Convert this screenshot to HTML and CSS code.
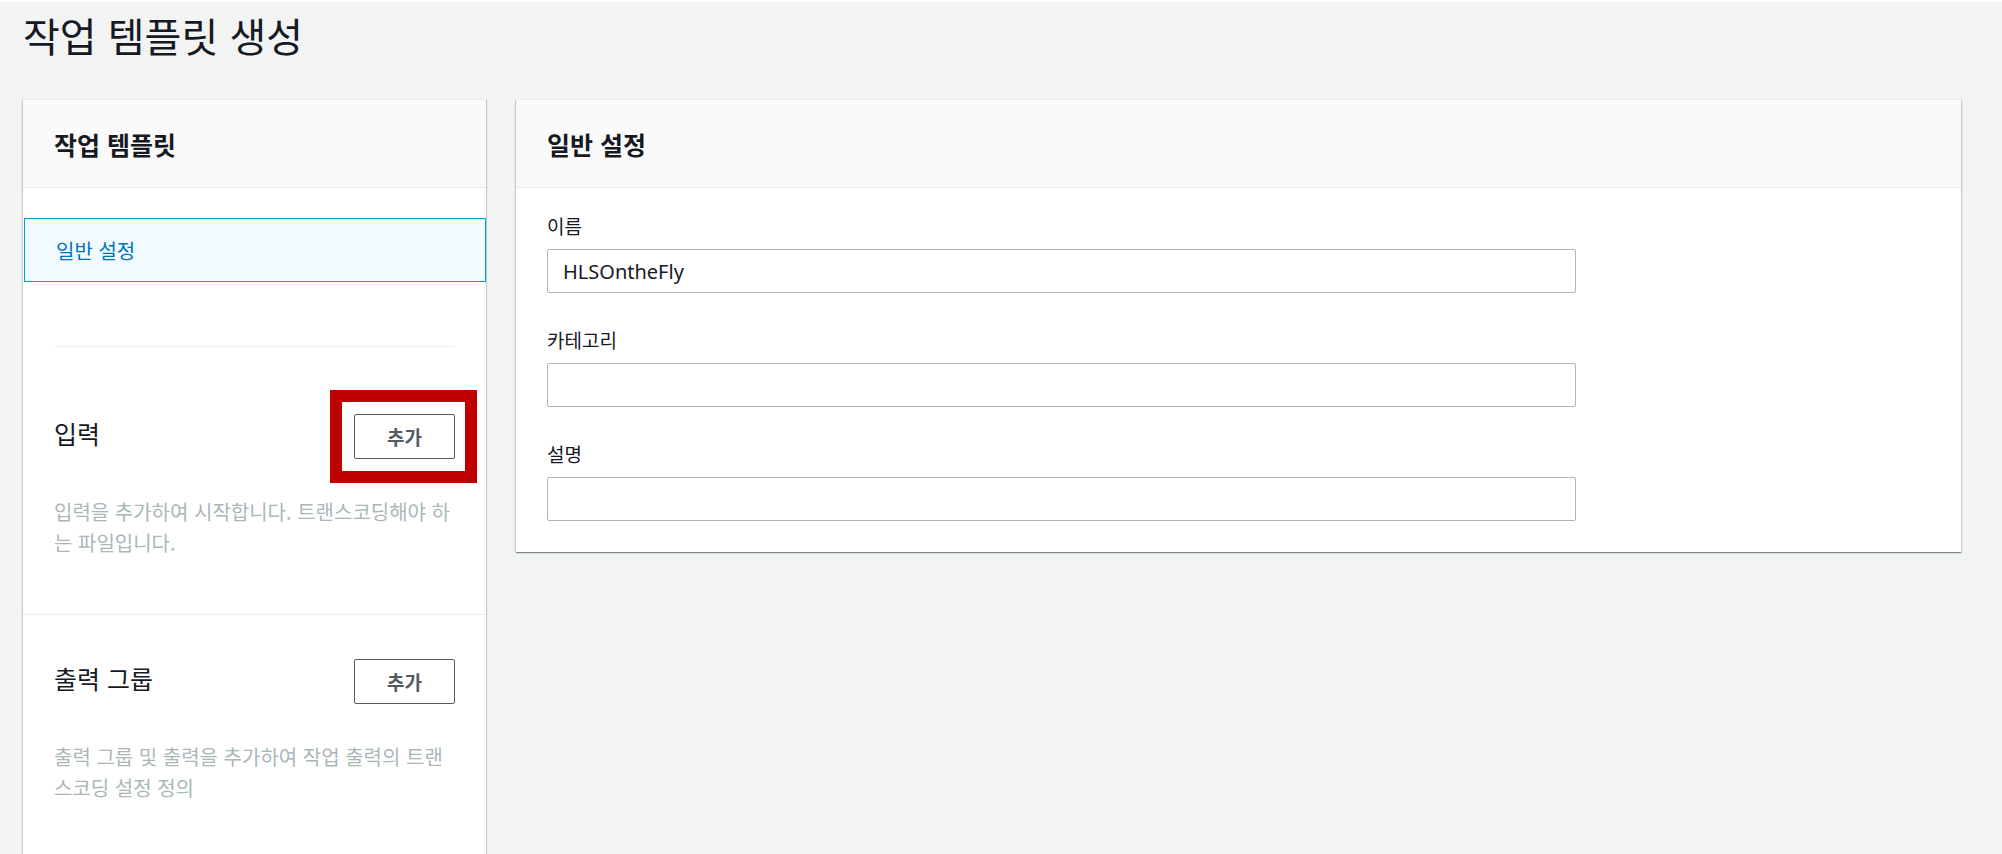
FILE: index.html
```html
<!DOCTYPE html>
<html lang="ko">
<head>
<meta charset="utf-8">
<title>작업 템플릿 생성</title>
<link rel="stylesheet" href="styles.css">
</head>
<body>
<main class="page">
  <h1 class="page-title">작업 템플릿 생성</h1>
  <div class="layout">
    <aside class="panel side-panel">
      <div class="panel-header"><h2 class="panel-title">작업 템플릿</h2></div>
      <div class="side-body">
        <div class="nav-item">일반 설정</div>
        <hr class="divider">
        <section class="side-section">
          <div class="section-row">
            <h3 class="section-title">입력</h3>
            <span class="highlight"><button class="btn" type="button">추가</button></span>
          </div>
          <p class="section-desc">입력을 추가하여 시작합니다. 트랜스코딩해야 하는 파일입니다.</p>
        </section>
        <section class="side-section side-section-bordered">
          <div class="section-row">
            <h3 class="section-title">출력 그룹</h3>
            <button class="btn" type="button">추가</button>
          </div>
          <p class="section-desc">출력 그룹 및 출력을 추가하여 작업 출력의 트랜스코딩 설정 정의</p>
        </section>
      </div>
    </aside>
    <section class="panel main-panel">
      <div class="panel-header"><h2 class="panel-title">일반 설정</h2></div>
      <div class="form-body">
        <div class="field">
          <label class="field-label" for="name">이름</label>
          <input class="text-input" id="name" type="text" value="HLSOntheFly">
        </div>
        <div class="field">
          <label class="field-label" for="category">카테고리</label>
          <input class="text-input" id="category" type="text" value="">
        </div>
        <div class="field">
          <label class="field-label" for="desc">설명</label>
          <input class="text-input" id="desc" type="text" value="">
        </div>
      </div>
    </section>
  </div>
</main>
</body>
</html>
```
FILE: styles.css
```css
html, body {
  margin: 0;
  padding: 0;
  overflow: hidden;
}

body {
  background: #f2f3f3;
  border-top: 2px solid #ffffff;
  font-family: "Noto Sans CJK KR", "Noto Sans", sans-serif;
  color: #16191f;
}

.page {
  padding: 8px 0 0 23px;
}

.page-title {
  margin: 0;
  font-size: 40px;
  line-height: 50px;
  font-weight: 400;
  color: #16191f;
}

.layout {
  margin-top: 39px;
  display: grid;
  grid-template-columns: 463px 1445px;
  column-gap: 30px;
  align-items: start;
}

.panel {
  background: #ffffff;
  border-top: 1px solid #eaeded;
  box-shadow: 0 1px 1px 0 rgba(0, 28, 36, 0.3),
              1px 1px 1px 0 rgba(0, 28, 36, 0.15),
              -1px 1px 1px 0 rgba(0, 28, 36, 0.15);
}

.panel-header {
  box-sizing: border-box;
  height: 88px;
  padding: 0 31px;
  display: flex;
  align-items: center;
  background: #fafafa;
  border-bottom: 1px solid #eaeded;
}

.panel-title {
  margin: 0;
  font-size: 25px;
  line-height: 30px;
  font-weight: 700;
  color: #16191f;
}

.side-panel {
  min-height: 800px;
}

.side-body {
  padding-top: 30px;
}

.nav-item {
  box-sizing: border-box;
  height: 64px;
  margin-left: 1px;
  padding-left: 31px;
  display: flex;
  align-items: center;
  background: #f1faff;
  border: 1px solid #00a1c9;
  font-size: 20px;
  color: #0073bb;
}

.divider {
  margin: 64px 31px 0;
  border: 0;
  border-top: 1px solid #eaeded;
  height: 0;
}

.side-section {
  padding: 67px 31px 56px;
}

.side-section-bordered {
  border-top: 1px solid #eaeded;
  padding-top: 44px;
}

.section-row {
  display: flex;
  align-items: center;
  justify-content: space-between;
}

.section-title {
  margin: 0;
  padding-bottom: 8px;
  font-size: 25px;
  line-height: 30px;
  font-weight: 400;
  color: #16191f;
}

.btn {
  box-sizing: border-box;
  width: 101px;
  height: 45px;
  padding: 0;
  background: #ffffff;
  border: 1px solid #545b64;
  border-radius: 2px;
  font-family: "Noto Sans CJK KR", "Noto Sans", sans-serif;
  font-size: 19px;
  font-weight: 700;
  color: #545b64;
  display: block;
}

.highlight {
  position: relative;
  display: block;
}

.highlight::after {
  content: "";
  position: absolute;
  top: -24px;
  bottom: -24px;
  left: -24px;
  right: -22px;
  border: 12px solid #c00000;
  pointer-events: none;
}

.section-desc {
  margin: 37px 0 0;
  font-size: 20px;
  line-height: 31px;
  color: #aab7b8;
}

.form-body {
  padding: 25px 31px 31px;
}

.field + .field {
  margin-top: 34px;
}

.field-label {
  display: block;
  margin-bottom: 10px;
  font-size: 19px;
  line-height: 26px;
  color: #16191f;
}

.text-input {
  box-sizing: border-box;
  display: block;
  width: 1029px;
  height: 44px;
  margin: 0;
  padding: 0 15px;
  border: 1px solid #aab7b8;
  border-radius: 2px;
  background: #ffffff;
  font-family: "Noto Sans", "Noto Sans CJK KR", sans-serif;
  font-size: 20px;
  color: #16191f;
  outline: none;
}
```
